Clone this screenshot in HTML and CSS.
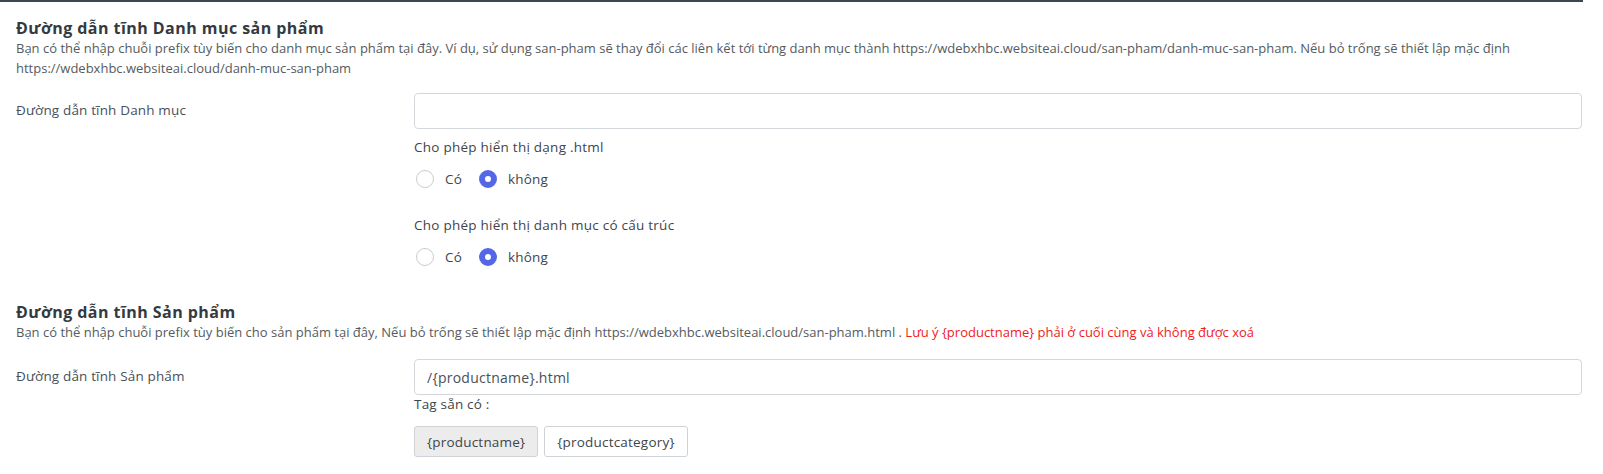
FILE: index.html
```html
<!DOCTYPE html>
<html lang="vi">
<head>
<meta charset="utf-8">
<title>Đường dẫn tĩnh</title>
<link rel="stylesheet" href="styles.css">
</head>
<body>
<div class="panel">
  <section class="block">
    <h2 class="block-title">Đường dẫn tĩnh Danh mục sản phẩm</h2>
    <p class="block-desc">Bạn có thể nhập chuỗi prefix tùy biến cho danh mục sản phẩm tại đây. Ví dụ, sử dụng san-pham sẽ thay đổi các liên kết tới từng danh mục thành https://wdebxhbc.websiteai.cloud/san-pham/danh-muc-san-pham. Nếu bỏ trống sẽ thiết lập mặc định https://wdebxhbc.websiteai.cloud/danh-muc-san-pham</p>
    <div class="form-row">
      <label class="row-label">Đường dẫn tĩnh Danh mục</label>
      <div class="row-field">
        <input class="text-input" type="text" value="">
        <div class="opt-title first">Cho phép hiển thị dạng .html</div>
        <div class="radio-group">
          <span class="radio-item"><span class="radio"></span><span class="radio-text">Có</span></span>
          <span class="radio-item"><span class="radio checked"></span><span class="radio-text">không</span></span>
        </div>
        <div class="opt-title second">Cho phép hiển thị danh mục có cấu trúc</div>
        <div class="radio-group">
          <span class="radio-item"><span class="radio"></span><span class="radio-text">Có</span></span>
          <span class="radio-item"><span class="radio checked"></span><span class="radio-text">không</span></span>
        </div>
      </div>
    </div>
  </section>
  <section class="block block-2">
    <h2 class="block-title">Đường dẫn tĩnh Sản phẩm</h2>
    <p class="block-desc">Bạn có thể nhập chuỗi prefix tùy biến cho sản phẩm tại đây, Nếu bỏ trống sẽ thiết lập mặc định https://wdebxhbc.websiteai.cloud/san-pham.html . <span class="warn">Lưu ý {productname} phải ở cuối cùng và không được xoá</span></p>
    <div class="form-row form-row-2">
      <label class="row-label">Đường dẫn tĩnh Sản phẩm</label>
      <div class="row-field">
        <input class="text-input" type="text" value="/{productname}.html">
        <div class="tag-title">Tag sẵn có :</div>
        <div class="tags">
          <span class="tag active">{productname}</span>
          <span class="tag">{productcategory}</span>
        </div>
      </div>
    </div>
  </section>
</div>
</body>
</html>
```
FILE: styles.css
```css
* { box-sizing: border-box; }
body {
  margin: 0;
  background: #fff;
  font-family: "Open Sans", "Liberation Sans", sans-serif;
  color: #495057;
}
.panel {
  width: 1583px;
  border-top: 2px solid #3f464d;
  padding: 16px 1px 0 16px;
}
.block-title {
  margin: 0;
  font-size: 16px;
  line-height: 20px;
  font-weight: 700;
  letter-spacing: 0.45px;
  color: #343a40;
}
.block-desc {
  margin: 0;
  font-size: 13px;
  line-height: 20px;
  color: #555b61;
}
.warn { color: #f21b1b; }
.form-row {
  display: grid;
  grid-template-columns: 398px 1fr;
  margin-top: 15px;
}
.form-row-2 { margin-top: 17px; }
.row-label {
  padding-top: 7px;
  font-size: 13.5px;
  line-height: 20px;
  letter-spacing: 0.15px;
  color: #495057;
}
.text-input {
  display: block;
  width: 100%;
  height: 36px;
  border: 1px solid #d3d7dc;
  border-radius: 4px;
  padding: 0 12px;
  font: inherit;
  font-size: 14px;
  letter-spacing: 0.25px;
  color: #495057;
  outline: none;
}
.opt-title {
  font-size: 13.5px;
  line-height: 20px;
  letter-spacing: 0.25px;
  color: #3f454b;
}
.opt-title.first { margin-top: 8px; }
.opt-title.second { margin-top: 26px; }
.radio-group {
  display: flex;
  gap: 17px;
  margin-top: 12px;
  padding-left: 2px;
  height: 20px;
  align-items: center;
}
.radio-item {
  display: flex;
  align-items: center;
  gap: 11px;
}
.radio {
  width: 18px;
  height: 18px;
  border-radius: 50%;
  border: 1px solid #c9cdd2;
  background: #fff;
}
.radio.checked {
  border: 6px solid #5468e6;
}
.radio-text {
  font-size: 13.5px;
  letter-spacing: 0.2px;
  color: #3f454b;
}
.block-2 { margin-top: 35px; }
.tag-title {
  font-size: 13.5px;
  line-height: 18px;
  letter-spacing: 0.2px;
  color: #3f454b;
}
.tags {
  display: flex;
  gap: 6px;
  margin-top: 13px;
}
.tag {
  height: 31px;
  display: flex;
  align-items: center;
  padding: 0 12px;
  border: 1px solid #cfd2d6;
  border-radius: 3px;
  font-size: 13.5px;
  letter-spacing: 0.2px;
  color: #3f454b;
  background: #fff;
}
.tag.active { background: #ececec; }
```
